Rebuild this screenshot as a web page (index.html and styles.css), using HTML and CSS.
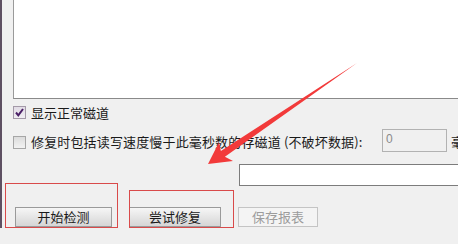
FILE: index.html
```html
<!DOCTYPE html>
<html lang="zh-CN">
<head>
<meta charset="utf-8">
<title>坏道检测与修复</title>
<link rel="stylesheet" href="styles.css">
</head>
<body>
<div class="window">
  <div class="list"></div>
  <div class="row row-show">
    <span class="box checked"><svg width="11" height="11" viewBox="0 0 11 11"><path d="M2 5.5 L4.3 8.3 L9 2" fill="none" stroke="#4a1f66" stroke-width="2"/></svg></span>
    <span class="label">显示正常磁道</span>
  </div>
  <div class="row row-slow">
    <span class="box"></span>
    <span class="label slow-label">修复时包括读写速度慢于此毫秒数的存磁道 (不破坏数据):</span>
    <span class="num">0</span>
    <span class="label unit">毫</span>
  </div>
  <div class="field"></div>
  <div class="buttons">
    <span class="btn b1">开始检测</span>
    <span class="btn b2">尝试修复</span>
    <span class="btn b3 disabled">保存报表</span>
  </div>
</div>
<div class="mark m1"></div>
<div class="mark m2"></div>
<svg class="arrow" width="458" height="244" viewBox="0 0 458 244">
  <polygon points="357,63 224.9,156.8 233,161 208,164 219,142.3 220.9,151" fill="#f23a3a"/>
</svg>
</body>
</html>
```

FILE: styles.css
```css
html, body {
  margin: 0;
  padding: 0;
}
body {
  width: 458px;
  height: 244px;
  overflow: hidden;
  background: #f0f0f0;
  font-family: "Noto Sans CJK SC", "Noto Sans", sans-serif;
  font-size: 13px;
  color: #1a1a1a;
  position: relative;
}
.window {
  height: 228px;
  border-left: 2px solid #5e5062;
  padding-left: 11px;
  overflow: hidden;
}
.list {
  height: 98px;
  margin-right: -20px;
  background: #ffffff;
  border-left: 1px solid #9a9a9a;
  border-bottom: 1px solid #8a8a8a;
}
.row {
  display: flex;
  align-items: flex-start;
}
.row-show {
  margin-top: 7px;
  height: 14px;
}
.row-slow {
  margin-top: 9px;
  height: 23px;
}
.box {
  flex: none;
  width: 11px;
  height: 11px;
  border: 1px solid #a6a6a6;
  background: linear-gradient(#dcdcdc, #f2f2f2);
  display: flex;
  align-items: center;
  justify-content: center;
}
.box.checked {
  background: linear-gradient(#e2dce6, #f0eef2);
  border-color: #a49aa8;
}
.row-slow .box {
  margin-top: 7px;
}
.label {
  line-height: 14px;
  white-space: nowrap;
  margin-left: 5px;
}
.slow-label {
  margin-top: 6px;
  width: 351px;
  flex: none;
  letter-spacing: 0.15px;
}
.num {
  flex: none;
  box-sizing: border-box;
  width: 65px;
  height: 23px;
  border: 1px solid #b2b2b2;
  background: #f0f0f0;
  color: #8a8a8a;
  font-family: "Liberation Sans", sans-serif;
  font-size: 12px;
  line-height: 14px;
  padding: 2px 0 0 3px;
}
.unit {
  margin-left: 4px;
  margin-top: 6px;
}
.field {
  margin-top: 12px;
  margin-left: 226px;
  margin-right: -20px;
  height: 20px;
  background: #ffffff;
  border: 1px solid #7c7c7c;
}
.buttons {
  display: flex;
  gap: 17px;
  margin-top: 21px;
  margin-left: 2px;
}
.btn {
  box-sizing: border-box;
  height: 20px;
  border: 1px solid #9a9a9a;
  background: linear-gradient(#f6f6f6, #e4e4e4 55%, #d6d6d6);
  text-align: center;
  line-height: 17px;
  color: #1a1a1a;
}
.b1 { width: 97px; }
.b2 { width: 92px; }
.b3 { width: 80px; }
.btn.disabled {
  border-color: #c4c4c4;
  background: #f4f4f4;
  color: #9c9c9c;
}
.mark {
  position: absolute;
  border: 1px solid #d94a4a;
  box-sizing: border-box;
}
.m1 {
  left: 5px;
  top: 183px;
  width: 113px;
  height: 45px;
}
.m2 {
  left: 129px;
  top: 190px;
  width: 105px;
  height: 38px;
}
.arrow {
  position: absolute;
  left: 0;
  top: 0;
  pointer-events: none;
}
```
